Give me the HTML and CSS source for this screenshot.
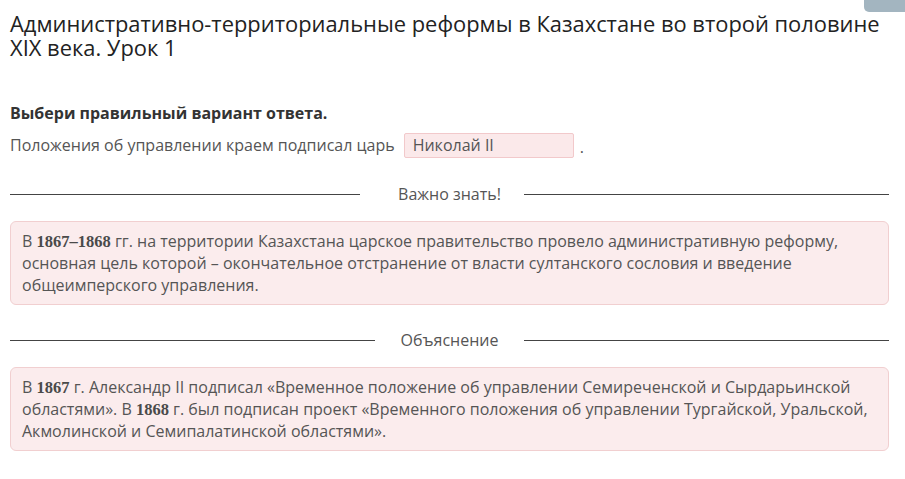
FILE: index.html
```html
<!DOCTYPE html>
<html lang="ru">
<head>
<meta charset="utf-8">
<link rel="stylesheet" href="styles.css">
</head>
<body>
<div class="tab"></div>
<main class="page">
  <h1 class="title">Административно-территориальные реформы в Казахстане во второй половине XIX века. Урок 1</h1>
  <p class="task">Выбери правильный вариант ответа.</p>
  <div class="question">
    <span>Положения об управлении краем подписал царь</span>
    <span class="answer">Николай II</span>
    <span class="dot">.</span>
  </div>
  <div class="divider divider-important"><span class="line line-left"></span><span class="label">Важно знать!</span><span class="line line-right"></span></div>
  <div class="note">В <b class="num">1867–1868</b> гг. на территории Казахстана царское правительство провело административную реформу, основная цель которой – окончательное отстранение от власти султанского сословия и введение общеимперского управления.</div>
  <div class="divider divider-explain"><span class="line line-left"></span><span class="label">Объяснение</span><span class="line line-right"></span></div>
  <div class="note">В <b class="num">1867</b> г. Александр II подписал «Временное положение об управлении Семиреченской и Сырдарьинской областями». В <b class="num">1868</b> г. был подписан проект «Временного положения об управлении Тургайской, Уральской, Акмолинской и Семипалатинской областями».</div>
</main>
</body>
</html>
```
FILE: styles.css
```css
html, body {
  margin: 0;
  padding: 0;
  background: #fff;
}
body {
  font-family: "Open Sans", "Liberation Sans", sans-serif;
  color: #444;
  position: relative;
}
.tab {
  position: absolute;
  top: 0;
  right: 0;
  width: 41px;
  height: 12px;
  background: #a3b5c0;
  border-bottom-left-radius: 5px;
}
.page {
  padding: 12px 16px 0 10px;
}
.title {
  margin: 0;
  font-size: 21.9px;
  font-weight: 400;
  line-height: 24px;
  color: #222;
}
.task {
  margin: 42px 0 0;
  font-size: 16px;
  font-weight: 700;
  line-height: 22px;
  color: #333;
}
.question {
  margin-top: 8px;
  display: flex;
  align-items: center;
  font-size: 16px;
  line-height: 22px;
  color: #555;
}
.answer {
  margin-left: 9px;
  width: 170px;
  height: 25px;
  box-sizing: border-box;
  padding: 0 8px;
  line-height: 23px;
  font-size: 16px;
  background: #fbe9ea;
  border: 1px solid #f2c9cb;
  border-radius: 2px;
  color: #555;
}
.dot {
  margin-left: 6px;
  margin-top: 4px;
}
.divider {
  display: grid;
  grid-template-columns: 1fr auto 1fr;
  align-items: center;
  height: 20px;
  margin: 26px 0 17px;
}
.divider-explain {
  margin-top: 25px;
}
.line {
  height: 1px;
  background: #444;
}
.divider-important .line-left {
  margin-right: 38px;
}
.divider-important .line-right {
  margin-left: 23px;
}
.divider-explain .line-left {
  margin-right: 26px;
}
.divider-explain .line-right {
  margin-left: 26px;
}
.label {
  font-size: 16px;
  color: #555;
  line-height: 20px;
}
.note {
  box-sizing: border-box;
  padding: 8px 11px;
  min-height: 83px;
  background: #fbeced;
  border: 1px solid #f1cfd0;
  border-radius: 6px;
  font-size: 16px;
  line-height: 22px;
  color: #555;
}
.num {
  font-family: "Liberation Serif", "DejaVu Serif", serif;
  font-weight: 700;
  font-size: 16.5px;
  line-height: 1;
  color: #4a4a4a;
}
```
